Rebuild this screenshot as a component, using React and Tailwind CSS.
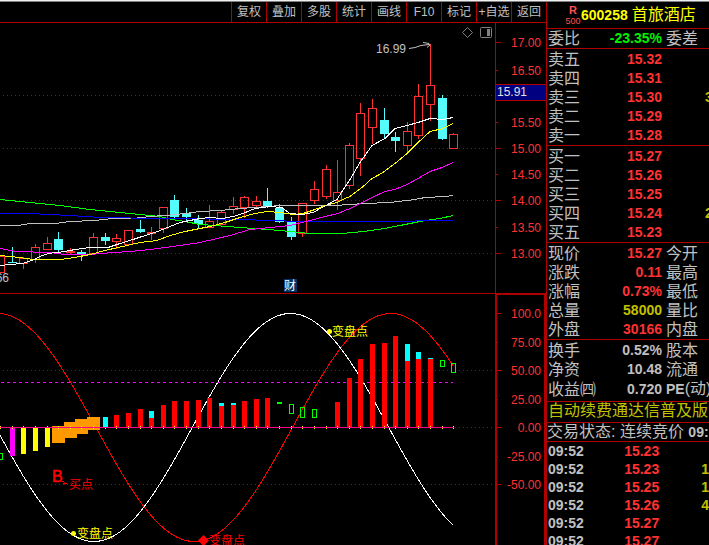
import clsx from "clsx";

const toolbar = ["复权", "叠加", "多股", "统计", "画线", "F10", "标记", "+自选", "返回"];

// x, high, top of body, bottom of body, low, falling
const candles = [
  [0.5, 256, 256, 272, 272],
  [12.5, 247, 262, 263, 263, true],
  [23.5, 257, 258, 263, 268],
  [35.5, 244, 247, 259, 262],
  [47.5, 237, 243, 249, 249],
  [58.5, 232, 239, 250, 253, true],
  [70.5, 248, 251, 252, 254],
  [81.5, 250, 252, 254, 261, true],
  [93.5, 233, 237, 253, 253],
  [105.5, 233, 237, 241, 245, true],
  [116.5, 234, 238, 241, 248],
  [128.5, 230, 230, 244, 244],
  [140.5, 220, 229, 232, 233, true],
  [151.5, 227, 232, 233, 239],
  [163.5, 207, 207, 228, 232],
  [174.5, 195, 200, 217, 218, true],
  [186.5, 208, 213, 217, 221, true],
  [198.5, 215, 220, 224, 228, true],
  [209.5, 205, 221, 227, 227],
  [221.5, 210, 212, 224, 224],
  [233.5, 197, 206, 209, 213],
  [244.5, 196, 197, 207, 217],
  [256.5, 196, 201, 205, 207],
  [267.5, 188, 201, 206, 208, true],
  [279.5, 204, 208, 222, 223, true],
  [291.5, 217, 222, 237, 240, true],
  [302.5, 203, 203, 233, 236],
  [314.5, 181, 189, 200, 203],
  [326.5, 165, 169, 196, 198],
  [337.5, 160, 192, 200, 209],
  [349.5, 143, 145, 185, 188],
  [360.5, 103, 113, 158, 175],
  [372.5, 99, 108, 127, 143],
  [384.5, 108, 120, 134, 138, true],
  [395.5, 132, 137, 141, 152, true],
  [407.5, 122, 131, 145, 152],
  [418.5, 84, 96, 135, 138],
  [430.5, 44, 85, 104, 120],
  [442.5, 95, 98, 139, 140, true],
  [453.5, 133, 134, 148, 148],
];

const averages = [
  {
    color: "#00ff00",
    points:
      "0,199 30,202 60,205 90,209 120,212 140,214 160,216 172,219 185,221 200,224 215,225 240,227 268,229 290,231 310,233 342,233 363,231 385,228 405,224 425,220 440,218 453,215",
  },
  {
    color: "#c0c0c0",
    points:
      "0,225 18,225 30,223 55,223 70,221 95,220 112,218 133,218 150,216 165,215 185,213 200,211 220,210 240,208 255,207 280,205 335,205 350,204 365,203 390,202 415,199 425,197 445,196 453,195",
  },
  {
    color: "#0000ff",
    points: "0,213 30,213 70,215 100,217 160,218 180,218 240,219 300,221 410,221 420,220 453,220",
  },
  {
    color: "#ff00ff",
    points:
      "0,248 15,251 50,252 65,254 90,254 100,253 130,251 150,249 165,247 180,245 200,242 230,235 250,229 270,227 290,225 310,220 325,216 338,213 350,208 360,203 372,197 385,191 395,189 407,184 418,178 430,171 442,167 453,162",
  },
  {
    color: "#ffff00",
    points:
      "0,255 20,257 33,259 60,259 75,257 90,254 105,250 140,242 157,240 170,235 185,231 200,228 210,226 225,222 240,217 255,213 267,211 280,212 293,214 303,213 315,209 325,205 337,202 345,198 350,196 362,187 372,178 383,172 395,163 407,153 418,142 430,131 443,128 453,123",
  },
  {
    color: "#ffffff",
    points:
      "0,265 22,263 32,260 40,256 48,253 65,251 75,249 90,247 108,247 120,243 133,239 142,236 155,232 165,228 180,222 200,218 210,217 222,218 233,216 243,213 255,208 270,206 282,207 290,213 302,214 313,212 322,207 337,199 342,191 350,179 360,162 372,145 385,138 395,128 407,125 418,122 430,118 443,119 453,117",
  },
];

const priceAxis = [
  [42, "17.00"],
  [70, "16.50"],
  [122, "15.50"],
  [148, "15.00"],
  [174, "14.50"],
  [200, "14.00"],
  [227, "13.50"],
  [253, "13.00"],
];

const cycleAxis = [
  [313, "100.0"],
  [342, "75.00"],
  [370, "50.00"],
  [399, "25.00"],
  [427, "0.00"],
  [456, "-25.00"],
  [484, "-50.00"],
];

// candle index, top, bottom, colour
const bars = [
  [1, 427, 456, "#ff00ff"],
  [2, 427, 454, "#ffff00"],
  [3, 427, 451, "#ffff00"],
  [4, 427, 447, "#ffff00"],
  [9, 417, 427, "#00ffff"],
  [10, 415, 427, "#ff0000"],
  [11, 413, 427, "#ff0000"],
  [12, 409, 427, "#ff0000"],
  [13, 418, 427, "#ff0000"],
  [13, 411, 418, "#00ffff"],
  [14, 405, 427, "#ff0000"],
  [15, 401, 427, "#ff0000"],
  [16, 401, 427, "#ff0000"],
  [17, 400, 427, "#ff0000"],
  [18, 398, 427, "#ff0000"],
  [19, 406, 427, "#ff0000"],
  [19, 403, 406, "#00ffff"],
  [20, 405, 427, "#ff0000"],
  [20, 403, 405, "#00ffff"],
  [21, 401, 427, "#ff0000"],
  [22, 399, 427, "#ff0000"],
  [23, 398, 427, "#ff0000"],
  [24, 402, 404, "#00ff00"],
  [29, 402, 427, "#ff0000"],
  [30, 378, 427, "#ff0000"],
  [31, 359, 427, "#ff0000"],
  [32, 344, 427, "#ff0000"],
  [33, 343, 427, "#ff0000"],
  [34, 336, 427, "#ff0000"],
  [35, 361, 427, "#ff0000"],
  [35, 344, 361, "#00ffff"],
  [36, 359, 427, "#ff0000"],
  [36, 352, 359, "#00ffff"],
  [37, 359, 427, "#ff0000"],
  [37, 358, 359, "#00ffff"],
];

const hollowBars = [
  [0, 453, 459],
  [25, 404, 413],
  [26, 407, 417],
  [27, 409, 417],
  [38, 360, 366],
  [39, 363, 372],
];

const steps = [
  [52, 426, 443],
  [64, 422, 438],
  [75, 419, 434],
  [87, 417, 430],
];

function cycle(peak) {
  const points = [];
  for (let x = 0; x <= 453; x += 3) {
    const y = 427.5 - 114 * Math.cos((2 * Math.PI * (x - peak)) / 393);
    points.push(`${x},${y.toFixed(1)}`);
  }
  return points.join(" ");
}

function Candle({ data: [x, high, top, bottom, low, falling] }) {
  if (falling) {
    return (
      <g fill="#54fcfc">
        <rect x={x - 0.5} y={high} width="1" height={low - high} />
        <rect x={x - 4.5} y={top} width="9" height={bottom - top} />
      </g>
    );
  }
  return (
    <g stroke="#ff3232" fill="none">
      <path d={`M${x} ${high}V${top}M${x} ${bottom + 1}V${low + 1}`} />
      <rect x={x - 4} y={top + 0.5} width="8" height={bottom - top} />
    </g>
  );
}

function Grid({ rows }) {
  return (
    <g stroke="#b00000" strokeDasharray="1 3">
      {rows.map((y) => (
        <path key={y} d={`M3 ${y + 0.5}H494`} />
      ))}
    </g>
  );
}

function Scale({ marks, major }) {
  return (
    <g>
      {marks.map(([y, label]) => (
        <g key={label}>
          <path d={`M496 ${y + 0.5}h${major.includes(y) ? 5 : 2}`} stroke="#b00000" />
          <text x="541" y={y + 5} textAnchor="end" fill="#ff3232">
            {label}
          </text>
        </g>
      ))}
    </g>
  );
}

function PriceChart() {
  return (
    <svg
      viewBox="0 23 546 270"
      preserveAspectRatio="xMaxYMin meet"
      className="block h-[270px] w-full text-[12px]"
      role="img"
      aria-label="K线图"
    >
      <Grid rows={[95, 148, 200, 253]} />
      {candles.map((c) => (
        <Candle key={c[0]} data={c} />
      ))}
      <g fill="none" shapeRendering="crispEdges">
        {averages.map((line) => (
          <polyline key={line.color} points={line.points} stroke={line.color} transform="translate(0 .5)" />
        ))}
      </g>

      <g fill="#c0c0c0">
        <text x="376" y="53">16.99</text>
        <text x="9" y="282" textAnchor="end">12.66</text>
      </g>
      <path d="M409 48.500L415 47.500L421 45.500L429 44.500M423 42.500L429 43.500L430 45L427 47.500" stroke="#c0c0c0" fill="none" />

      <g stroke="#808080" fill="none">
        <path d="M467.500 27.500L472.500 32.500L467.500 37.500L462.500 32.500Z" />
        <rect x="480.500" y="27.500" width="11" height="10" rx="1" />
        <rect x="487" y="29" width="3" height="7" fill="#808080" stroke="none" />
      </g>

      <rect x="284" y="279" width="13" height="13" fill="#003468" />
      <text x="284" y="290" fill="#ffffff">财</text>

      <path d="M495.500 23V293" stroke="#b00000" />
      <Scale marks={priceAxis} major={[42, 148, 200, 253]} />
      <rect x="496" y="84" width="50" height="17" fill="#000080" />
      <path d="M496 84.500H546M496 100.500H546" stroke="#b00000" />
      <text x="497" y="96" fill="#e0e0e0">15.91</text>
    </svg>
  );
}

function CycleChart() {
  return (
    <svg
      viewBox="0 293 546 252"
      preserveAspectRatio="xMaxYMin meet"
      className="block h-[252px] w-full text-[12px]"
      role="img"
      aria-label="变盘点指标"
    >
      <path d="M0 293.500H495" stroke="#b00000" />
      <Grid rows={[370, 427, 484]} />
      <g fill="none" shapeRendering="crispEdges">
        <polyline points={cycle(-2.3)} stroke="#ff0000" />
        <polyline points={cycle(290.5)} stroke="#ffffff" />
      </g>
      <path d="M1 382.500H453" stroke="#ff00ff" strokeDasharray="3 3" />

      {bars.map(([i, top, bottom, color]) => (
        <rect key={`${i}-${top}`} x={candles[i][0] - 2.5} y={top} width="5" height={bottom - top} fill={color} />
      ))}
      {hollowBars.map(([i, top, bottom]) => (
        <rect key={i} x={candles[i][0] - 2} y={top + 0.5} width="4" height={bottom - top} stroke="#00ff00" fill="none" />
      ))}
      {steps.map(([x, top, bottom]) => (
        <rect key={x} x={x} y={top} width="13" height={bottom - top} fill="#ff9900" />
      ))}

      <path d="M0 427.500H454" stroke="#ff0080" />
      {candles.map(([x]) => (
        <path key={x} d={`M${x} 426v1M${x} 428v1`} stroke="#ffff00" />
      ))}

      <g fill="#ff0000">
        <text x="52" y="482" fontSize="16" stroke="#ff0000" strokeWidth=".5">B</text>
        <path d="M62 481.500h2M63 483.500h4M65 482v3" stroke="#ff0000" />
        <text x="69" y="489">买点</text>
        <path d="M203.500 535L209 540.500L203.500 546L198 540.500Z" />
        <text x="209" y="545">变盘点</text>
      </g>
      <g fill="#ffff00">
        <circle cx="73.500" cy="533.500" r="2.500" />
        <text x="77" y="538">变盘点</text>
        <circle cx="329.500" cy="331.500" r="2.500" />
        <text x="332" y="336">变盘点</text>
      </g>

      <path d="M545 545V294H496V545" stroke="#b00000" strokeWidth="2" fill="none" />
      <Scale marks={cycleAxis} major={[313, 370, 427, 484]} />
    </svg>
  );
}

const sells = [
  ["卖五", "15.32"],
  ["卖四", "15.31"],
  ["卖三", "15.30", "3"],
  ["卖二", "15.29"],
  ["卖一", "15.28"],
];

const buys = [
  ["买一", "15.27"],
  ["买二", "15.26"],
  ["买三", "15.25"],
  ["买四", "15.24", "2"],
  ["买五", "15.23"],
];

const quotes = [
  ["现价", "15.27", "今开", "text-[#ff3232]"],
  ["涨跌", "0.11", "最高", "text-[#ff3232]"],
  ["涨幅", "0.73%", "最低", "text-[#ff3232]"],
  ["总量", "58000", "量比", "text-[#c0c000]"],
  ["外盘", "30166", "内盘", "text-[#ff3232]"],
];

const basics = [
  ["换手", "0.52%", "股本"],
  ["净资", "10.48", "流通"],
  ["收益㈣", "0.720", <><b className="text-[14px]">PE</b>(动)</>],
];

const ticks = [
  ["09:52", "15.23"],
  ["09:52", "15.23", "1"],
  ["09:52", "15.25", "1"],
  ["09:52", "15.26", "4"],
  ["09:52", "15.27"],
  ["09:52", "15.27"],
];

function Row({ label, value, tone = "text-[#c0c0c0]", children }) {
  return (
    <tr className="h-[19px]">
      <th scope="row" className="w-[50px] min-w-[50px] p-0 text-left font-normal">{label}</th>
      <td className={clsx("w-[64px] min-w-[64px] p-0 text-right text-[14px] font-bold", tone)}>{value}</td>
      {children}
    </tr>
  );
}

function Section({ children, className }) {
  return (
    <table
      className={clsx(
        "block border-b border-[#b00000] pt-px pl-px leading-[19px] whitespace-nowrap",
        className
      )}
    >
      <tbody>{children}</tbody>
    </table>
  );
}

function Book({ rows }) {
  return (
    <Section>
      {rows.map(([label, price, volume]) => (
        <Row key={label} label={label} value={price} tone="text-[#ff3232]">
          <td className="p-0 pl-[43px] text-[14px] font-bold text-[#c0c000]">{volume}</td>
        </Row>
      ))}
    </Section>
  );
}

function QuotePanel() {
  return (
    <aside className="w-[163px] shrink-0 overflow-hidden border-l border-[#b00000] text-[16px] text-[#c0c0c0]">
      <header className="flex h-[27px] items-center border-b border-[#b00000] pl-[18px] whitespace-nowrap text-[#ffff00]">
        <div className="flex w-4 flex-col items-center text-[#ff5050]">
          <b className="text-[11px] leading-[12px]">R</b>
          <span className="text-[9px] leading-[10px]">500</span>
        </div>
        <b className="text-[14px]">600258</b>
        <h1 className="ml-1">首旅酒店</h1>
      </header>
      <table className="block h-5 border-b border-[#b00000] pl-px leading-[19px] whitespace-nowrap">
        <tbody>
          <Row label="委比" value="-23.35%" tone="text-[#00f000]">
            <td className="p-0 pl-1">委差</td>
          </Row>
        </tbody>
      </table>
      <Book rows={sells} />
      <Book rows={buys} />
      <Section>
        {quotes.map(([label, value, next, tone]) => (
          <Row key={label} label={label} value={value} tone={tone}>
            <td className="p-0 pl-1">{next}</td>
          </Row>
        ))}
      </Section>
      <Section className="pb-0.5">
        {basics.map(([label, value, next]) => (
          <Row key={label} label={label} value={value}>
            <td className="p-0 pl-1">{next}</td>
          </Row>
        ))}
      </Section>
      <p className="h-[21px] border-b border-[#b00000] pl-px leading-[18px] whitespace-nowrap text-[#c0c000]">
        自动续费通达信普及版
      </p>
      <p className="h-[19px] border-b border-[#b00000] leading-[18px] whitespace-nowrap">
        交易状态: 连续竞价 <b className="text-[14px]">09:</b>
      </p>
      <table className="text-[14px] leading-[18px] font-bold whitespace-nowrap">
        <tbody>
          {ticks.map(([time, price, volume], i) => (
            <tr key={i}>
              <td className="w-[50px] p-0 pl-px">{time}</td>
              <td className="w-[63px] p-0 text-right text-[#ff3232]">{price}</td>
              <td className="p-0 pl-[42px] text-[#c0c000]">{volume}</td>
            </tr>
          ))}
        </tbody>
      </table>
    </aside>
  );
}

export default function App() {
  return (
    <div className="flex h-screen flex-col overflow-hidden bg-black font-['Liberation_Sans','Noto_Sans_CJK_SC',sans-serif]">
      <div className="h-0.5 shrink-0 border-b border-[#808080] bg-[#f0f0f0]" />
      <div className="flex min-h-0 flex-1">
        <main className="min-w-0 flex-1">
          <nav className="flex h-[21px] justify-end border-b border-[#b00000]">
            {toolbar.map((item) => (
              <button
                key={item}
                type="button"
                className="w-[35px] border-l border-[#b00000] text-center text-[12px] leading-5 whitespace-nowrap text-[#c0c0c0] hover:text-white"
              >
                {item}
              </button>
            ))}
          </nav>
          <PriceChart />
          <CycleChart />
        </main>
        <QuotePanel />
      </div>
    </div>
  );
}
